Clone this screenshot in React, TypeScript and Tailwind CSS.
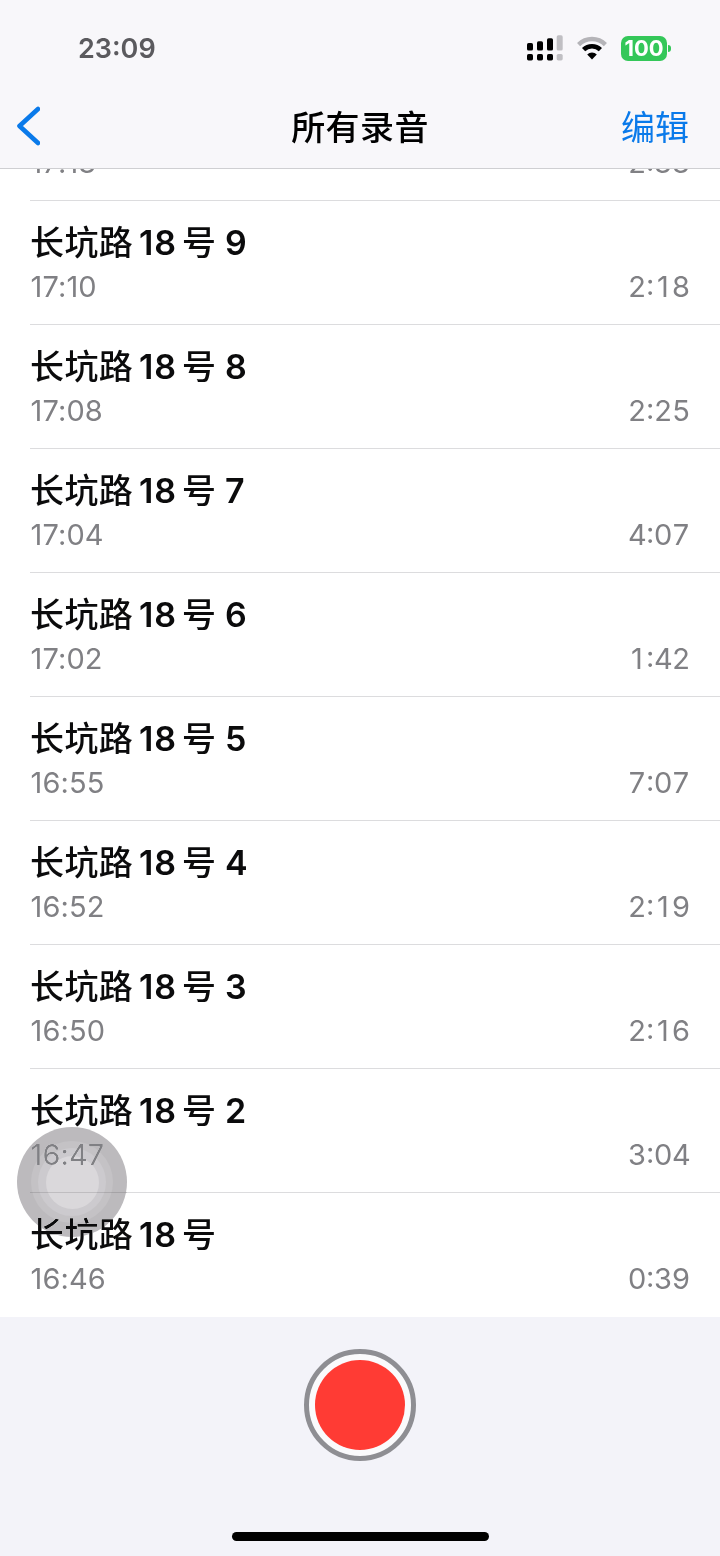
type Recording = {
  number: string;
  time: string;
  duration: string;
};

const recordings: Recording[] = [
  { number: "9", time: "17:10", duration: "2:18" },
  { number: "8", time: "17:08", duration: "2:25" },
  { number: "7", time: "17:04", duration: "4:07" },
  { number: "6", time: "17:02", duration: "1:42" },
  { number: "5", time: "16:55", duration: "7:07" },
  { number: "4", time: "16:52", duration: "2:19" },
  { number: "3", time: "16:50", duration: "2:16" },
  { number: "2", time: "16:47", duration: "3:04" },
  { number: "", time: "16:46", duration: "0:39" },
];

const SignalIcon = () => (
  <svg width="36" height="26" viewBox="0 0 36 26">
    <g fill="#000">
      <rect x="0" y="8" width="6" height="7.5" rx="1.6" />
      <rect x="10" y="6.3" width="6" height="9.2" rx="1.6" />
      <rect x="20" y="3.3" width="6" height="12.2" rx="1.6" />
      <rect x="0" y="19" width="6" height="6.4" rx="1.6" />
      <rect x="10" y="19" width="6" height="6.4" rx="1.6" />
      <rect x="20" y="19" width="6" height="6.4" rx="1.6" />
    </g>
    <g fill="#c0bfc3">
      <rect x="29.7" y="0.3" width="6" height="15.2" rx="1.6" />
      <rect x="29.7" y="19" width="6" height="6.4" rx="1.6" />
    </g>
  </svg>
);

const WifiIcon = () => (
  <svg width="30" height="24" viewBox="0 0 30 24" fill="none">
    <path d="M1.6 8.6A19 19 0 0 1 28.4 8.6" stroke="#b5b4b8" strokeWidth="4.4" />
    <path d="M6.6 13.7A12 12 0 0 1 23.4 13.7" stroke="#000" strokeWidth="4.6" />
    <path d="M10.2 18.6A6.8 6.8 0 0 1 19.8 18.6L15 23.6Z" fill="#000" />
  </svg>
);

const StatusBar = () => (
  <div className="flex h-[84px] items-center justify-between pt-3 pr-[49px] pl-[78px]">
    <span className="pt-0.5 text-[27px] leading-7 font-semibold text-[#5b5a5e]">
      23:09
    </span>
    <div className="flex items-center">
      <SignalIcon />
      <div className="ml-[14px]">
        <WifiIcon />
      </div>
      <div className="ml-[14px] flex h-[25px] w-[46px] items-center justify-center rounded-[7px] bg-[#34c759] text-[22px] leading-none font-bold text-white">
        100
      </div>
      <div className="ml-px h-[7px] w-[3px] rounded-r-full bg-[#34c759]" />
    </div>
  </div>
);

const NavBar = () => (
  <div className="grid h-[84px] grid-cols-3 items-center pr-[31px] pl-[16px]">
    <svg width="24" height="40" viewBox="0 0 24 40" fill="none">
      <path
        d="M22 3L3.5 20L22 37"
        stroke="#0a7aea"
        strokeWidth="4.6"
        strokeLinecap="round"
        strokeLinejoin="round"
      />
    </svg>
    <h1 className="pt-[3px] pl-[15px] text-center text-[34px] leading-10 font-medium tracking-[0.4px] text-black">
      所有录音
    </h1>
    <button className="pt-[3px] text-right text-[34px] leading-10 text-[#0a7aea]">
      编辑
    </button>
  </div>
);

// Every digit gets the same cell so the durations line up
const Duration = ({ value }: { value: string }) => {
  const [minutes, seconds] = value.split(":");

  return (
    <span className="flex text-center">
      <span className="w-[18px]">{minutes}</span>
      <span className="relative -top-0.5 w-2">:</span>
      <span className="w-[18px]">{seconds[0]}</span>
      <span className="w-[18px]">{seconds[1]}</span>
    </span>
  );
};

const Times = ({ time, duration }: { time: string; duration: string }) => (
  <div className="flex h-[43px] shrink-0 items-center justify-between text-[29px] leading-none text-[#808084]">
    <span className="pl-[0.5px] tracking-[0.1px]">{time}</span>
    <Duration value={duration} />
  </div>
);

const RecordingRow = ({ recording }: { recording: Recording }) => (
  <li className="ml-[30px] h-[124px] border-b border-[#dcdcde] pt-5 pr-[30px] last:border-transparent">
    <div className="flex h-11 items-center text-[34px] leading-none font-semibold text-[#0b0b0c]">
      <span className="w-[109px] font-medium tracking-[0.4px]">长坑路</span>
      <span className="w-[43px] tracking-[0.8px]">18</span>
      <span className="w-[43px] font-medium">号</span>
      <span>{recording.number}</span>
    </div>
    <Times time={recording.time} duration={recording.duration} />
  </li>
);

// darken keeps the text underneath readable
const AssistiveTouch = () => (
  <div className="absolute top-[1127px] left-[17px] flex size-[110px] items-center justify-center rounded-full bg-[#bcbabd] mix-blend-darken">
    <div className="flex size-[82px] items-center justify-center rounded-full bg-[#c4c2c5]">
      <div className="flex size-[68px] items-center justify-center rounded-full bg-[#cccace]">
        <div className="size-[53px] rounded-full bg-[#dad8db]" />
      </div>
    </div>
    <div className="absolute top-[65px] right-0 left-[13px] h-px bg-black/12" />
  </div>
);

export default function App() {
  return (
    <div className="relative flex h-[1556px] w-[720px] flex-col overflow-hidden bg-white font-['Inter','Noto_Sans_CJK_SC',sans-serif]">
      <header className="h-[169px] shrink-0 border-b border-[#cfcfd2] bg-[#f8f7fa]">
        <StatusBar />
        <NavBar />
      </header>

      <main className="h-[1148px] shrink-0">
        {/* row scrolled halfway under the header */}
        <div className="ml-[30px] flex h-8 flex-col justify-end overflow-hidden border-b border-[#dcdcde] pr-[30px] pb-4">
          <Times time="17:13" duration="2:33" />
        </div>
        <ul>
          {recordings.map((recording) => (
            <RecordingRow key={recording.time} recording={recording} />
          ))}
        </ul>
      </main>

      <footer className="flex flex-1 flex-col items-center bg-[#f3f3f9] pt-8">
        <button className="flex size-[112px] items-center justify-center rounded-full border-[5.5px] border-[#8e8e93] bg-[#fafafc]">
          <span className="size-[90px] rounded-full bg-[#ff3b34]" />
        </button>
        <div className="mt-[71px] h-[9px] w-[257px] rounded-full bg-black" />
      </footer>

      <AssistiveTouch />
    </div>
  );
}
